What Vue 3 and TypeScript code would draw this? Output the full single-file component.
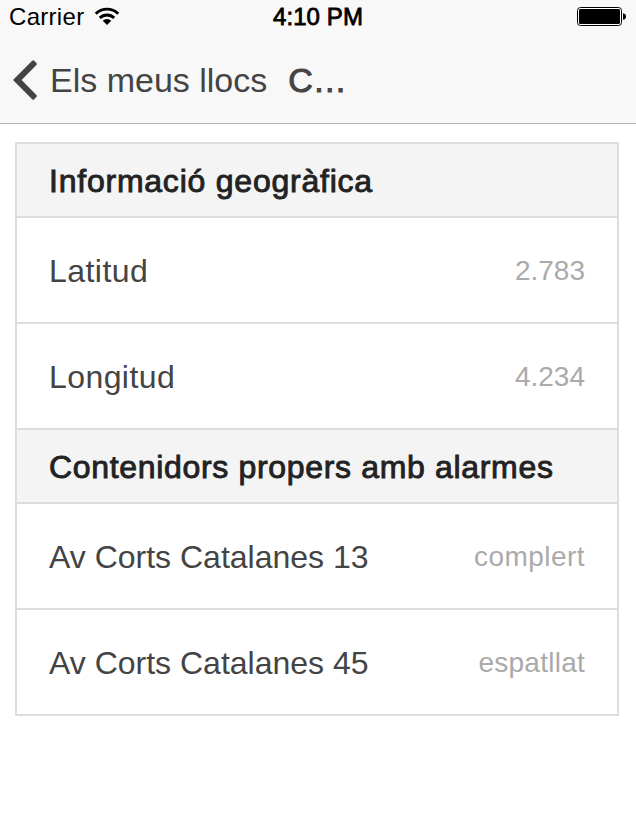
<script setup lang="ts">
interface Row { label: string; value: string; labelSpacing?: number; valueSpacing?: number }
interface Section { title: string; spacing: number; rows: Row[] }
const sections: Section[] = [
  { title: 'Informació geogràfica', spacing: 0.77, rows: [
    { label: 'Latitud', value: '2.783', labelSpacing: 0.45 },
    { label: 'Longitud', value: '4.234', labelSpacing: 0.42 },
  ] },
  { title: 'Contenidors propers amb alarmes', spacing: 0.67, rows: [
    { label: 'Av Corts Catalanes 13', value: 'complert', valueSpacing: 0.45 },
    { label: 'Av Corts Catalanes 45', value: 'espatllat', valueSpacing: 0.25 },
  ] },
]
const tracking = (px = 0) => ({ letterSpacing: `${px}px` })
</script>

<template>
  <div class="screen">
    <header class="top">
      <div class="status">
        <div class="carrier">
          <span>Carrier</span>
          <svg class="wifi" viewBox="0 0 26 19" width="26" height="19">
            <path d="M13 18 8.7 13.8a6.2 6.2 0 0 1 8.6 0Z" fill="#000" />
            <path d="M5.8 10.9a10.3 10.3 0 0 1 14.4 0M1.8 6.7a16 16 0 0 1 22.4 0" fill="none" stroke="#000" stroke-width="2.9" />
          </svg>
        </div>
        <div class="time">4:10 PM</div>
        <svg class="battery" viewBox="0 0 50 20" width="50" height="20">
          <rect x="0.5" y="0.5" width="44" height="18" rx="3" fill="#fff" stroke="#000" />
          <rect x="2" y="2" width="41" height="15" rx="1.5" />
          <path d="M46 6.2q3 .5 3 3.3t-3 3.3Z" />
        </svg>
      </div>
      <nav class="nav">
        <svg class="back" viewBox="0 0 28 42" width="28" height="42">
          <path d="M3 21 22.2 1.8Q23.2 .8 24.2 1.8L26.4 4Q27.4 5 26.4 6L11.6 21 26.4 36Q27.4 37 26.4 38L24.2 40.2Q23.2 41.2 22.2 40.2Z" fill="#444" />
        </svg>
        <span class="back-label">Els meus llocs</span>
        <h1>C…</h1>
      </nav>
    </header>
    <main class="list">
      <section v-for="s in sections" :key="s.title">
        <h2 :style="tracking(s.spacing)">{{ s.title }}</h2>
        <div v-for="r in s.rows" :key="r.label" class="row">
          <span :style="tracking(r.labelSpacing)">{{ r.label }}</span>
          <span class="note" :style="tracking(r.valueSpacing)">{{ r.value }}</span>
        </div>
      </section>
    </main>
  </div>
</template>

<style>
body { background: #fff; }
</style>
<style scoped>
.screen { width: 636px; height: 835px; background: #fff; color: #444; font-family: "Liberation Sans", Arial, sans-serif; overflow: hidden; }
.top { box-sizing: border-box; height: 124px; background: #f8f8f8; border-bottom: 1px solid #b2b2b2; }
.status { display: grid; grid-template-columns: 1fr auto 1fr; height: 34px; padding: 0 9px; align-items: center; color: #000; font-size: 24px; }
.carrier { display: flex; align-items: center; gap: 10px; letter-spacing: 0.3px; }
.wifi { margin-bottom: 2px; }
.time { -webkit-text-stroke: 0.8px #000; letter-spacing: 0.1px; }
.battery { justify-self: end; }
.nav { display: flex; align-items: center; height: 92px; padding-left: 10px; }
.back { margin-bottom: 1px; }
.back-label { font-size: 34px; margin-left: 12px; }
h1 { font-size: 34px; font-weight: normal; -webkit-text-stroke: 1px #444; margin: 0 0 0 21px; }
.list { margin: 18px 17px 0 15px; border: 2px solid #ddd; }
h2 { box-sizing: border-box; height: 74px; margin: 0; padding: 0 32px; font-size: 32px; font-weight: normal; line-height: 74px; -webkit-text-stroke: 0.9px #222; color: #222; background: #f4f4f4; border-bottom: 2px solid #ddd; white-space: nowrap; }
.row { box-sizing: border-box; height: 106px; padding: 2px 32px 0; display: flex; align-items: center; justify-content: space-between; border-bottom: 2px solid #ddd; font-size: 32px; }
.note { color: #aaa; font-size: 28px; }
section:last-child .row:last-child { height: 104px; border-bottom: 0; }
</style>
